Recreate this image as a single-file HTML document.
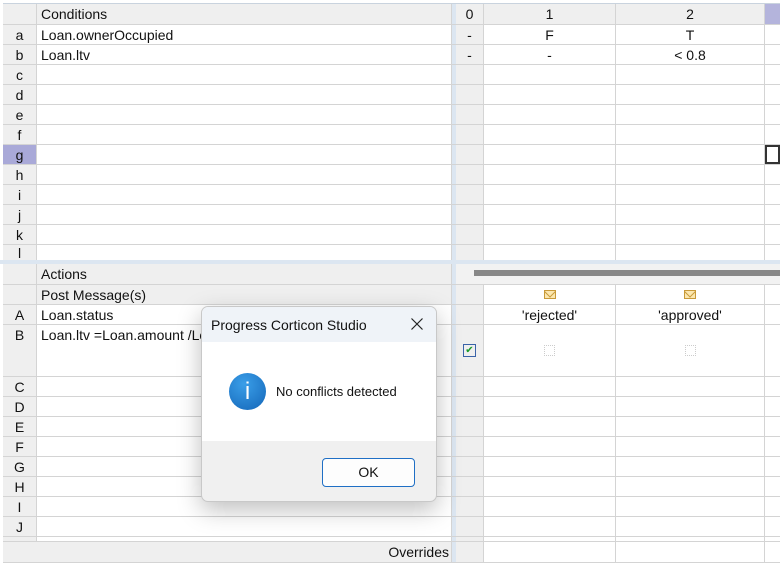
<!DOCTYPE html>
<html><head><meta charset="utf-8"><style>
*{box-sizing:border-box;margin:0;padding:0}
body{width:780px;height:564px;background:#fff;font-family:"Liberation Sans",sans-serif;font-size:14px;color:#111;position:relative;overflow:hidden}
.r{position:absolute;left:3px;width:777px;display:flex;border-bottom:1px solid #d4d4d4}
.r>div{height:100%;border-right:1px solid #d4d4d4;display:flex;align-items:center;white-space:nowrap;overflow:hidden}
.l{width:34px;background:#efefef;justify-content:center}
.t{width:415px;padding-left:4px}
.s{width:4px;background:#dce6f1;border-right:none!important}
.c0{width:28px;background:#efefef;justify-content:center}
.c1{width:132px;justify-content:center}
.c2{width:149px;justify-content:center}
.c3{flex:1;border-right:none!important}
.g{background:#efefef}
.env{width:12px;height:9px;border:1px solid #c89a3a;background:#fbe7b0;position:relative}
.env:after{content:"";position:absolute;left:1px;top:-3px;width:7px;height:7px;border-right:1px solid #c89a3a;border-bottom:1px solid #c89a3a;transform:rotate(45deg)}
.cb{width:11px;height:11px;border:1px dotted #ccc}
</style></head><body>
<div style="position:absolute;left:0;top:0;width:780px;height:4px;background:#fff;border-bottom:1px solid #c9d3de"></div>
<div style="position:absolute;left:0;top:0;width:3px;height:564px;background:#fff"></div>

<div class="r" style="top:4px;height:21px"><div class="l"></div><div class="t g" style="background:#efefef">Conditions</div><div class="s"></div><div class="c0">0</div><div class="c1 g">1</div><div class="c2 g">2</div><div class="c3" style="background:#b4b4dc"></div></div>
<div class="r" style="top:25px;height:20px"><div class="l">a</div><div class="t">Loan.ownerOccupied</div><div class="s"></div><div class="c0">-</div><div class="c1">F</div><div class="c2">T</div><div class="c3"></div></div>
<div class="r" style="top:45px;height:20px"><div class="l">b</div><div class="t">Loan.ltv</div><div class="s"></div><div class="c0">-</div><div class="c1">-</div><div class="c2">&lt; 0.8</div><div class="c3"></div></div>
<div class="r" style="top:65px;height:20px"><div class="l">c</div><div class="t"></div><div class="s"></div><div class="c0"></div><div class="c1"></div><div class="c2"></div><div class="c3"></div></div>
<div class="r" style="top:85px;height:20px"><div class="l">d</div><div class="t"></div><div class="s"></div><div class="c0"></div><div class="c1"></div><div class="c2"></div><div class="c3"></div></div>
<div class="r" style="top:105px;height:20px"><div class="l">e</div><div class="t"></div><div class="s"></div><div class="c0"></div><div class="c1"></div><div class="c2"></div><div class="c3"></div></div>
<div class="r" style="top:125px;height:20px"><div class="l">f</div><div class="t"></div><div class="s"></div><div class="c0"></div><div class="c1"></div><div class="c2"></div><div class="c3"></div></div>
<div class="r" style="top:145px;height:20px"><div class="l" style="background:#a9a9d8">g</div><div class="t"></div><div class="s"></div><div class="c0"></div><div class="c1"></div><div class="c2"></div><div class="c3" style="border:2px solid #333!important"></div></div>
<div class="r" style="top:165px;height:20px"><div class="l">h</div><div class="t"></div><div class="s"></div><div class="c0"></div><div class="c1"></div><div class="c2"></div><div class="c3"></div></div>
<div class="r" style="top:185px;height:20px"><div class="l">i</div><div class="t"></div><div class="s"></div><div class="c0"></div><div class="c1"></div><div class="c2"></div><div class="c3"></div></div>
<div class="r" style="top:205px;height:20px"><div class="l">j</div><div class="t"></div><div class="s"></div><div class="c0"></div><div class="c1"></div><div class="c2"></div><div class="c3"></div></div>
<div class="r" style="top:225px;height:20px"><div class="l">k</div><div class="t"></div><div class="s"></div><div class="c0"></div><div class="c1"></div><div class="c2"></div><div class="c3"></div></div>
<div class="r" style="top:245px;height:16px;border:none"><div class="l" style="align-items:flex-start">l</div><div class="t"></div><div class="s"></div><div class="c0"></div><div class="c1"></div><div class="c2"></div><div class="c3"></div></div>
<div style="position:absolute;left:0;top:260px;width:780px;height:4px;background:#dce6f1"></div>

<div class="r" style="top:264px;height:21px"><div class="l"></div><div class="t g">Actions</div><div class="s"></div><div style="flex:1;border:none;background:#f2f2f2;position:relative"><div style="position:absolute;left:18px;right:0;top:6px;height:6px;background:#888"></div></div></div>
<div class="r" style="top:285px;height:20px"><div class="l"></div><div class="t g">Post Message(s)</div><div class="s"></div><div class="c0"></div><div class="c1"><span class="env"></span></div><div class="c2"><span class="env"></span></div><div class="c3"></div></div>
<div class="r" style="top:305px;height:20px"><div class="l">A</div><div class="t">Loan.status</div><div class="s"></div><div class="c0"></div><div class="c1">'rejected'</div><div class="c2">'approved'</div><div class="c3"></div></div>
<div class="r" style="top:325px;height:52px"><div class="l" style="align-items:flex-start;padding-top:2px">B</div><div class="t" style="align-items:flex-start;padding-top:2px">Loan.ltv =Loan.amount /Loan.value</div><div class="s"></div><div class="c0"><span style="width:13px;height:13px;border:1px solid #3a63a8;color:#1a9a2a;font-size:10px;line-height:11px;text-align:center;display:block">✔</span></div><div class="c1"><span class="cb"></span></div><div class="c2"><span class="cb"></span></div><div class="c3"></div></div>
<div class="r" style="top:377px;height:20px"><div class="l">C</div><div class="t"></div><div class="s"></div><div class="c0"></div><div class="c1"></div><div class="c2"></div><div class="c3"></div></div>
<div class="r" style="top:397px;height:20px"><div class="l">D</div><div class="t"></div><div class="s"></div><div class="c0"></div><div class="c1"></div><div class="c2"></div><div class="c3"></div></div>
<div class="r" style="top:417px;height:20px"><div class="l">E</div><div class="t"></div><div class="s"></div><div class="c0"></div><div class="c1"></div><div class="c2"></div><div class="c3"></div></div>
<div class="r" style="top:437px;height:20px"><div class="l">F</div><div class="t"></div><div class="s"></div><div class="c0"></div><div class="c1"></div><div class="c2"></div><div class="c3"></div></div>
<div class="r" style="top:457px;height:20px"><div class="l">G</div><div class="t"></div><div class="s"></div><div class="c0"></div><div class="c1"></div><div class="c2"></div><div class="c3"></div></div>
<div class="r" style="top:477px;height:20px"><div class="l">H</div><div class="t"></div><div class="s"></div><div class="c0"></div><div class="c1"></div><div class="c2"></div><div class="c3"></div></div>
<div class="r" style="top:497px;height:20px"><div class="l">I</div><div class="t"></div><div class="s"></div><div class="c0"></div><div class="c1"></div><div class="c2"></div><div class="c3"></div></div>
<div class="r" style="top:517px;height:20px"><div class="l">J</div><div class="t"></div><div class="s"></div><div class="c0"></div><div class="c1"></div><div class="c2"></div><div class="c3"></div></div>
<div class="r" style="top:537px;height:5px"><div class="l"></div><div class="t"></div><div class="s"></div><div class="c0"></div><div class="c1"></div><div class="c2"></div><div class="c3"></div></div>
<div class="r" style="top:542px;height:21px"><div style="width:449px;background:#efefef;justify-content:flex-end;padding-right:2px">Overrides</div><div class="s"></div><div class="c0"></div><div class="c1"></div><div class="c2"></div><div class="c3"></div></div>

<div style="position:absolute;left:201px;top:306px;width:236px;height:196px;border:1px solid #c8c8c8;border-radius:7px;overflow:hidden;box-shadow:0 8px 24px rgba(0,0,0,.25);background:#f0f0f0">
 <div style="height:35px;background:#eff3f8;font-size:14px;padding:10px 0 0 9px;position:relative">Progress Corticon Studio<svg style="position:absolute;right:13px;top:11px" width="12" height="12" viewBox="0 0 12 12"><path d="M0.5 0.5L11.5 11.5M11.5 0.5L0.5 11.5" stroke="#222" stroke-width="1.2"/></svg></div>
 <div style="height:99px;background:#fff;position:relative">
  <div style="position:absolute;left:27px;top:31px;width:37px;height:37px;border-radius:50%;background:radial-gradient(circle at 40% 30%,#3a9ee8,#1466b8);color:#fff;text-align:center;font-size:24px;line-height:37px">i</div>
  <div style="position:absolute;left:74px;top:42px;font-size:13px">No conflicts detected</div>
 </div>
 <div style="position:absolute;left:120px;top:151px;width:93px;height:29px;border:1px solid #1f6fc5;border-radius:4px;background:#fdfdfd;text-align:center;line-height:27px;font-size:14px">OK</div>
</div>
</body></html>
